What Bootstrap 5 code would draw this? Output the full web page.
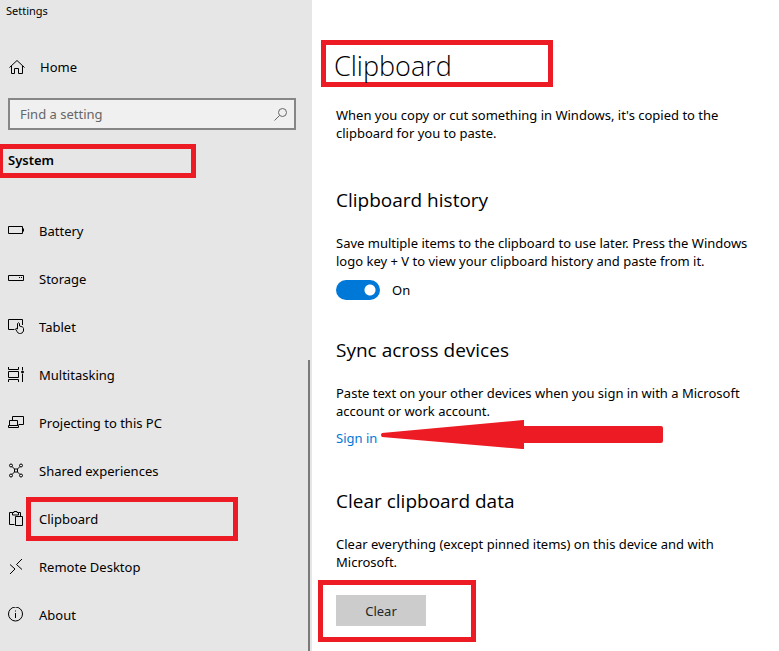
<!DOCTYPE html>
<html lang="en">
<head>
<meta charset="utf-8">
<meta name="viewport" content="width=device-width, initial-scale=1">
<title>Settings</title>
<link href="https://cdn.jsdelivr.net/npm/bootstrap@5.3.0/dist/css/bootstrap.min.css" rel="stylesheet">
<style>
  :root { --mark-red: #ed1c24; }
  body { font-family: "Noto Sans", "Open Sans", sans-serif; font-size: 13px; line-height: 18px; color: #000; background: #fff; }
  svg { fill: none; stroke: #000; stroke-width: 1; display: block; }
  .side { width: 312px; background: #e6e6e6; }
  .app-name { font-size: 11px; padding: 2px 6px; }
  .side-link { color: #000; text-decoration: none; height: 48px; padding-left: 8px; gap: 15px; }
  .home-link { margin-top: 21px; }
  .search { margin: 7px 16px 14px 8px; height: 32px; border: 2px solid #868686; background: #f0f0f0; padding: 0 6px 0 10px; }
  .search input { border: 0; background: transparent; outline: 0; padding: 0; min-width: 0; color: #000; }
  .search input::placeholder { color: #666; opacity: 1; }
  .search svg { stroke: #666; }
  .marked { border: 5px solid var(--mark-red); }
  .system-head { width: 198px; height: 34px; margin: 0 0 29px -2px; padding: 2px 5px; font-size: 13px; line-height: 18px; font-weight: 600; }
  .label-marked { width: 212px; height: 44px; margin-left: -13px; padding-left: 8px; }
  .scroll-thumb { right: 2px; top: 360px; bottom: 0; width: 2px; background: #7a7a7a; }
  .pane { padding: 40px 16px 8px 24px; }
  .title-box { width: 232px; height: 47px; margin: 0 0 19px -15px; padding-left: 8px; font-family: "Open Sans", sans-serif; font-size: 27px; line-height: 42px; font-weight: 300; }
  h2 { font-family: "Open Sans", sans-serif; font-size: 19px; line-height: 26px; font-weight: 400; margin: 0 0 21px; }
  .pane p { margin: 0; }
  .history { margin-top: 45px; }
  .switch-row { gap: 12px; margin-top: 8px; }
  .form-switch .form-check-input.toggle { width: 44px; height: 20px; margin: 0; border: 0; background-color: #0078d7;
    background-image: radial-gradient(circle at 34px 10px, #fff 5px, transparent 6px); background-position: 0 0; background-size: 44px 20px; }
  .sync { margin-top: 35px; }
  .sign { margin-top: 9px; }
  .sign a { color: #0078d7; text-decoration: none; }
  .arrow { left: 45px; top: -9px; }
  .arrow path { fill: var(--mark-red); stroke: none; }
  .clear-data { margin-top: 41px; }
  .clear-box { width: 158px; height: 62px; margin: 9px 0 0 -18px; padding: 10px 13px; }
  .btn-clear { width: 90px; height: 31px; background: #ccc; font-size: 13px; line-height: 18px; }
</style>
</head>
<body>
<div class="d-flex min-vh-100">
  <aside class="side position-relative flex-shrink-0 overflow-hidden">
    <div class="app-name">Settings</div>
    <a href="#" class="side-link home-link d-flex align-items-center">
      <svg width="17" height="16" viewBox="0 0 17 16"><path d="M1.500 8.500 9 1.500 16.500 8.500M3.500 7v7.500h3v-5h4v5h4V7"/></svg>
      <span>Home</span>
    </a>
    <div class="search d-flex align-items-center">
      <input type="text" class="flex-grow-1" placeholder="Find a setting" aria-label="Find a setting">
      <svg width="14" height="14" viewBox="0 0 14 14"><circle cx="8.500" cy="5.500" r="4"/><path d="M5.500 8.500.500 13.500"/></svg>
    </div>
    <h1 class="system-head marked">System</h1>
    <nav aria-label="System settings">
      <a href="#" class="side-link d-flex align-items-center">
        <svg width="16" height="16" viewBox="0 0 16 16"><path d="M.500 3.500h14v7H.500zM15.500 5.500v3"/></svg><span>Battery</span></a>
      <a href="#" class="side-link d-flex align-items-center">
        <svg width="16" height="16" viewBox="0 0 16 16"><path d="M.500 4.500h15v5H.500zM11 6.500h1M13 6.500h1"/></svg><span>Storage</span></a>
      <a href="#" class="side-link d-flex align-items-center">
        <svg width="16" height="16" viewBox="0 0 16 16"><path d="M6.500 10.500h-6V.500h14V6"/><path d="M9.500 10V4.500q1-1.500 2 0V7l3 1q1 .500 1 1.500v2.500q-1 2.500-3 2.500h-1q-1.500 0-2.500-2l-1.500-2.500q.500-1.500 2 0z"/></svg><span>Tablet</span></a>
      <a href="#" class="side-link d-flex align-items-center">
        <svg width="16" height="16" viewBox="0 0 16 16"><path d="M.500 0v2.500h10V0M.500 4.500h10v6H.500zM.500 15v-2.500h10V15M14.500 0v3M14.500 7v8"/><circle cx="14.500" cy="5" r="1" fill="#000"/></svg><span>Multitasking</span></a>
      <a href="#" class="side-link d-flex align-items-center">
        <svg width="16" height="16" viewBox="0 0 16 16"><path d="M4.500 5V1.500h11v8h-5M1.500 10.500v-5h8v5M.500 10.500h10v2h-10z"/></svg><span>Projecting to this PC</span></a>
      <a href="#" class="side-link d-flex align-items-center">
        <svg width="16" height="16" viewBox="0 0 16 16"><circle cx="3" cy="2.500" r="1.500"/><circle cx="13" cy="2.500" r="1.500"/><circle cx="3" cy="12.500" r="1.500"/><circle cx="13" cy="12.500" r="1.500"/><path d="M6.500 6h3v3h-3zM4 3.500 6.500 6M12 3.500 9.500 6M4 11.500 6.500 9M12 11.500 9.500 9"/></svg><span>Shared experiences</span></a>
      <a href="#" class="side-link d-flex align-items-center" aria-current="page">
        <svg width="16" height="16" viewBox="0 0 16 16"><path d="M6.500 13.500h-5v-12h3M10.500 1.500h2V5M4.500 4V1.500h1.500v-1h3v1h1.500V4zM7.500 5.500h7v9h-7z"/></svg><span class="label-marked marked d-flex align-items-center">Clipboard</span></a>
      <a href="#" class="side-link d-flex align-items-center">
        <svg width="16" height="16" viewBox="0 0 16 16"><path d="M2 5.500 7 10 2 15M14 0 8.500 5.500 14 10.500"/></svg><span>Remote Desktop</span></a>
      <a href="#" class="side-link d-flex align-items-center">
        <svg width="16" height="16" viewBox="0 0 16 16"><circle cx="7.500" cy="7" r="7"/><path d="M7.500 6v5M7.500 3.500v1"/></svg><span>About</span></a>
    </nav>
    <div class="scroll-thumb position-absolute"></div>
  </aside>
  <main class="pane flex-grow-1">
    <div class="title-box marked">Clipboard</div>
    <p>When you copy or cut something in Windows, it's copied to the clipboard for you to paste.</p>
    <section class="history">
      <h2>Clipboard history</h2>
      <p>Save multiple items to the clipboard to use later. Press the Windows logo key + V to view your clipboard history and paste from it.</p>
      <div class="form-check form-switch switch-row d-flex align-items-center p-0 mb-0">
        <input class="form-check-input toggle float-none" type="checkbox" role="switch" id="history" checked>
        <label for="history">On</label>
      </div>
    </section>
    <section class="sync">
      <h2>Sync across devices</h2>
      <p>Paste text on your other devices when you sign in with a Microsoft account or work account.</p>
      <div class="sign position-relative">
        <a href="#">Sign in</a>
        <svg class="arrow position-absolute" width="284" height="29" viewBox="0 0 284 29"><path d="M1 13 142 0h1v6h137q2 0 2 2v13q0 2-2 2H143v6h-2L1 17q-2-2 0-4z"/></svg>
      </div>
    </section>
    <section class="clear-data">
      <h2>Clear clipboard data</h2>
      <p>Clear everything (except pinned items) on this device and with Microsoft.</p>
      <div class="clear-box marked"><button type="button" class="btn btn-clear rounded-0 border-0 p-0">Clear</button></div>
    </section>
  </main>
</div>
<script src="https://cdn.jsdelivr.net/npm/bootstrap@5.3.0/dist/js/bootstrap.bundle.min.js"></script>
</body>
</html>
